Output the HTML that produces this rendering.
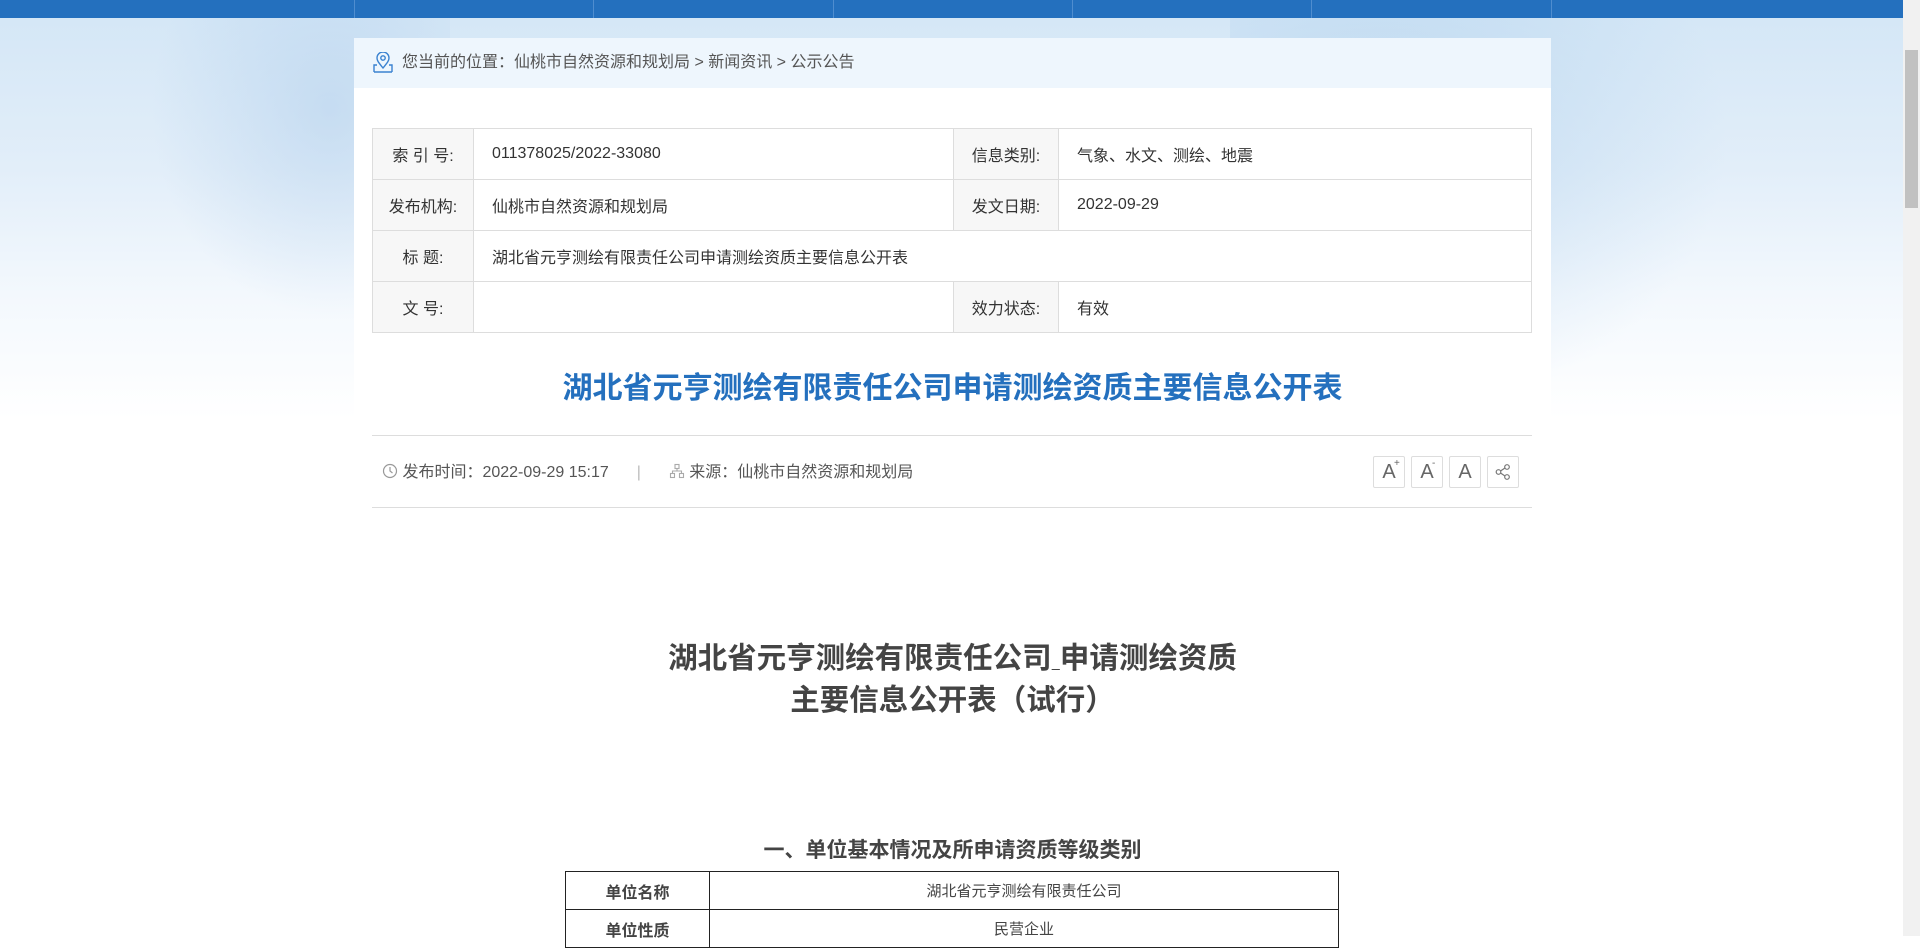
<!DOCTYPE html>
<html><head><meta charset="utf-8"><style>
*{margin:0;padding:0;box-sizing:border-box}
body{width:1920px;height:936px;overflow:hidden;font-family:"Liberation Sans","Noto Sans CJK SC",sans-serif;color:#333;position:relative;background:#fff}
.bg{position:absolute;left:0;top:0;width:1903px;height:420px;background:linear-gradient(180deg,#d3e6f6 0%,#e2eef9 40%,#f3f8fd 70%,#fff 100%)}
.bg2{position:absolute;left:1230px;top:18px;width:500px;height:400px;background:radial-gradient(ellipse at 30% 30%,rgba(170,205,235,.55),rgba(255,255,255,0) 70%)}
.bg3{position:absolute;left:150px;top:18px;width:300px;height:300px;background:radial-gradient(ellipse at 60% 30%,rgba(175,205,235,.5),rgba(255,255,255,0) 70%)}
.nav{position:absolute;left:0;top:0;width:1903px;height:18px;background:#2470be}
.nav i{position:absolute;top:0;height:18px;width:1px;background:#4f8dcf}
.scroll{position:absolute;right:0;top:0;width:17px;height:936px;background:#f1f1f1}
.scroll div{position:absolute;left:2px;top:50px;width:13px;height:158px;background:#c1c1c1}
.box{position:absolute;left:354px;top:38px;width:1197px;height:898px;background:#fff}
.crumb{height:50px;background:#eef6fd;font-size:16px;color:#555;line-height:50px;padding-left:48px;position:relative}
.crumb svg{position:absolute;left:18px;top:14px}
table.info{position:absolute;left:18px;top:90px;width:1160px;border-collapse:collapse;font-size:16px;color:#333}
table.info td{border:1px solid #ddd;height:51px;padding-left:18px}
table.info td.l{background:#f7f7f7;width:101px;padding:0;text-align:center}
h1{position:absolute;left:0;width:1197px;top:325px;text-align:center;font-size:30px;color:#2470be;font-weight:bold}
.hr{position:absolute;left:18px;width:1160px;height:1px;background:#ddd}
.meta{position:absolute;left:28px;top:423px;font-size:16px;color:#555;line-height:24px}
.btns{position:absolute;left:1019px;top:418px}
.btns span{display:inline-block;width:32px;height:32px;border:1px solid #ddd;border-radius:2px;margin-right:6px;text-align:center;line-height:30px;font-size:20px;color:#666;vertical-align:top;position:relative}
.btns sup{font-size:10px;position:absolute;top:-8px;left:20px}
.dt{position:absolute;left:0;width:1197px;top:600px;text-align:center;font-size:29.5px;font-weight:bold;color:#444;line-height:42px}
.sec{position:absolute;left:0;width:1197px;top:832px;text-align:center;font-size:21px;font-weight:bold;color:#444}
table.t{position:absolute;left:211px;top:833px;width:774px;border-collapse:collapse;font-size:15px}
table.t td{border:1px solid #222;height:38px;text-align:center;color:#444}
table.t td.a{width:144px;font-weight:bold;font-size:16px}
</style></head><body>
<div class="bg"></div><div class="bg2"></div><div class="bg3"></div>
<div class="nav"><i style="left:354px"></i><i style="left:593px"></i><i style="left:833px"></i><i style="left:1072px"></i><i style="left:1311px"></i><i style="left:1551px"></i></div>
<div class="box">
<div class="crumb"><svg width="22" height="22" viewBox="0 0 22 22" fill="none" stroke="#3a82d0" stroke-width="1.4"><path d="M11 16c-4-5-6-7-6-10a6 6 0 0 1 12 0c0 3-2 5-6 10z"/><circle cx="11" cy="6" r="2.2"/><path d="M2 20h18M2 20v-7h3M20 20v-7h-3"/></svg>您当前的位置：仙桃市自然资源和规划局 &gt; 新闻资讯 &gt; 公示公告</div>
<table class="info">
<tr><td class="l">索 引 号:</td><td>011378025/2022-33080</td><td class="l" style="width:105px">信息类别:</td><td>气象、水文、测绘、地震</td></tr>
<tr><td class="l">发布机构:</td><td style="width:480px">仙桃市自然资源和规划局</td><td class="l">发文日期:</td><td>2022-09-29</td></tr>
<tr><td class="l">标 题:</td><td colspan="3">湖北省元亨测绘有限责任公司申请测绘资质主要信息公开表</td></tr>
<tr><td class="l">文 号:</td><td></td><td class="l">效力状态:</td><td>有效</td></tr>
</table>
<h1>湖北省元亨测绘有限责任公司申请测绘资质主要信息公开表</h1>
<div class="hr" style="top:397px"></div>
<div class="meta"><svg width="16" height="16" viewBox="0 0 16 16" style="vertical-align:-2px" fill="none" stroke="#999" stroke-width="1.2"><circle cx="8" cy="8" r="6.5"/><path d="M8 4v4l2.5 2"/></svg> 发布时间：2022-09-29 15:17<span style="display:inline-block;width:60px;text-align:center;color:#bbb">|</span><svg width="16" height="16" viewBox="0 0 16 16" style="vertical-align:-2px" fill="none" stroke="#aaa" stroke-width="1.1"><rect x="6" y="1.5" width="4" height="4"/><rect x="1.5" y="10.5" width="4" height="4"/><rect x="10.5" y="10.5" width="4" height="4"/><path d="M8 5.5v2.5M3.5 10.5V8h9v2.5"/></svg> 来源：仙桃市自然资源和规划局</div>
<div class="btns"><span>A<sup>+</sup></span><span>A<sup>-</sup></span><span>A</span><span><svg width="18" height="18" viewBox="0 0 18 18" style="margin-top:6px" fill="none" stroke="#777" stroke-width="1.2"><circle cx="13" cy="4" r="2.3"/><circle cx="4.5" cy="9" r="2.3"/><circle cx="13" cy="14" r="2.3"/><path d="M6.5 8l4.5-3M6.5 10l4.5 3"/></svg></span></div>
<div class="hr" style="top:469px"></div>
<div class="dt">湖北省元亨测绘有限责任公司<span style="text-decoration:underline;text-decoration-thickness:1px"> </span>申请测绘资质<br>主要信息公开表（试行）</div>
<div class="sec" style="top:796px">一、单位基本情况及所申请资质等级类别</div>
<table class="t"><tr><td class="a">单位名称</td><td>湖北省元亨测绘有限责任公司</td></tr><tr><td class="a">单位性质</td><td>民营企业</td></tr></table>
</div>
<div class="scroll"><div></div></div>
</body></html>
